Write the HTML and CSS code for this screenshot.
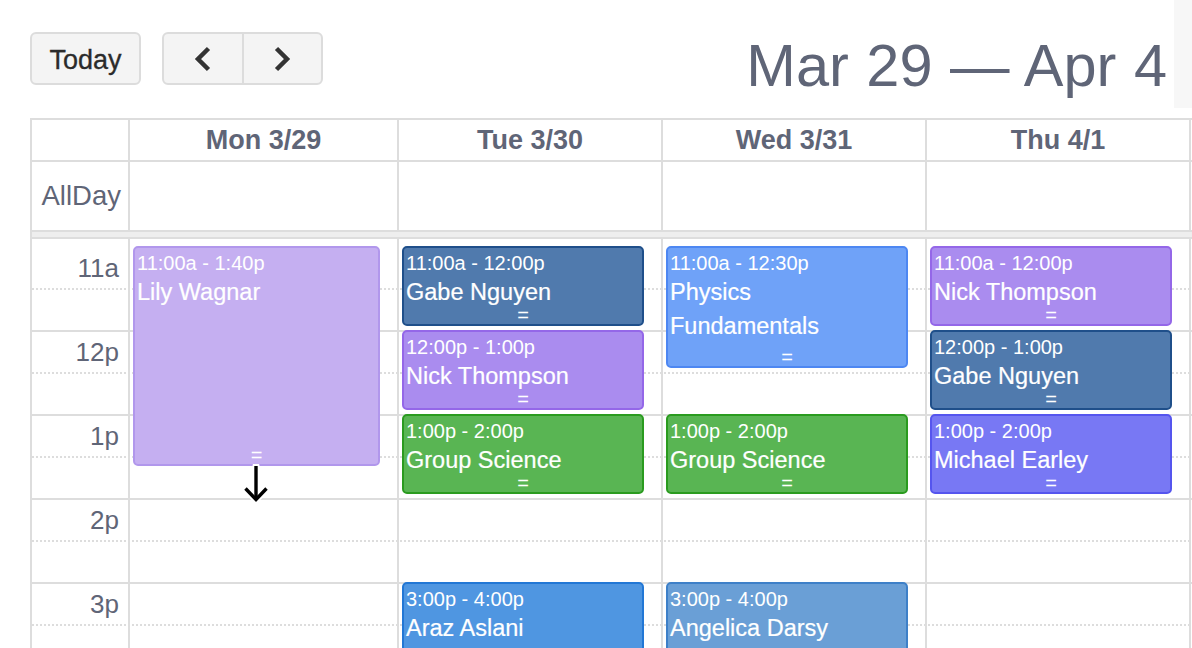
FILE: index.html
```html
<!DOCTYPE html>
<html lang="en">
<head>
<meta charset="utf-8">
<title>Calendar</title>
<link rel="stylesheet" href="styles.css">
</head>
<body>
<div class="page">
  <div class="toolbar">
    <button class="btn today">Today</button>
    <div class="btn-group">
      <button class="nav" aria-label="Previous"><svg width="20" height="26" viewBox="0 0 20 26"><polyline points="15.5,2.5 5,13 15.5,23.5" fill="none" stroke="#333" stroke-width="4.5"/></svg></button>
      <button class="nav" aria-label="Next"><svg width="20" height="26" viewBox="0 0 20 26"><polyline points="4.5,2.5 15,13 4.5,23.5" fill="none" stroke="#333" stroke-width="4.5"/></svg></button>
    </div>
    <h2 class="title">Mar 29 — Apr 4</h2>
    <div class="strip"></div>
  </div>

  <div class="cal">
    <div class="row head">
      <div class="cell axis"></div>
      <div class="cell">Mon 3/29</div>
      <div class="cell">Tue 3/30</div>
      <div class="cell">Wed 3/31</div>
      <div class="cell">Thu 4/1</div>
      <div class="cell"></div>
    </div>
    <div class="row allday">
      <div class="cell axis">AllDay</div>
      <div class="cell"></div>
      <div class="cell"></div>
      <div class="cell"></div>
      <div class="cell"></div>
      <div class="cell"></div>
    </div>
    <div class="divider"></div>

    <div class="timegrid">
      <div class="slots">
        <div class="slot partial"></div>
        <div class="slot hour"><span class="label">11a</span></div>
        <div class="slot half"></div>
        <div class="slot hour"><span class="label">12p</span></div>
        <div class="slot half"></div>
        <div class="slot hour"><span class="label">1p</span></div>
        <div class="slot half"></div>
        <div class="slot hour"><span class="label">2p</span></div>
        <div class="slot half"></div>
        <div class="slot hour"><span class="label">3p</span></div>
        <div class="slot half"></div>
      </div>

      <div class="cols">
        <div class="col axis"></div>

        <div class="col">
          <div class="event ev-lily" style="top:7px;height:220px">
            <div class="time">11:00a - 1:40p</div>
            <div class="name">Lily Wagnar</div>
            <div class="resizer">=</div>
          </div>
          <svg class="cursor" width="26" height="40" viewBox="0 0 26 40">
            <g fill="none" stroke="#fff" stroke-width="7" stroke-linecap="round" stroke-linejoin="round">
              <line x1="13" y1="2" x2="13" y2="35"/>
              <polyline points="2.5,24.5 13,35.5 23.5,24.5"/>
            </g>
            <g fill="none" stroke="#000" stroke-width="3.4" stroke-linejoin="miter">
              <line x1="13" y1="2" x2="13" y2="35"/>
              <polyline points="2.5,24.5 13,35.5 23.5,24.5"/>
            </g>
          </svg>
        </div>

        <div class="col">
          <div class="event ev-steel" style="top:7px;height:80px">
            <div class="time">11:00a - 12:00p</div>
            <div class="name">Gabe Nguyen</div>
            <div class="resizer">=</div>
          </div>
          <div class="event ev-violet" style="top:91px;height:80px">
            <div class="time">12:00p - 1:00p</div>
            <div class="name">Nick Thompson</div>
            <div class="resizer">=</div>
          </div>
          <div class="event ev-green" style="top:175px;height:80px">
            <div class="time">1:00p - 2:00p</div>
            <div class="name">Group Science</div>
            <div class="resizer">=</div>
          </div>
          <div class="event ev-blue" style="top:343px;height:80px">
            <div class="time">3:00p - 4:00p</div>
            <div class="name">Araz Aslani</div>
          </div>
        </div>

        <div class="col">
          <div class="event ev-sky" style="top:7px;height:122px">
            <div class="time">11:00a - 12:30p</div>
            <div class="name">Physics Fundamentals</div>
            <div class="resizer">=</div>
          </div>
          <div class="event ev-green" style="top:175px;height:80px">
            <div class="time">1:00p - 2:00p</div>
            <div class="name">Group Science</div>
            <div class="resizer">=</div>
          </div>
          <div class="event ev-denim" style="top:343px;height:80px">
            <div class="time">3:00p - 4:00p</div>
            <div class="name">Angelica Darsy</div>
          </div>
        </div>

        <div class="col">
          <div class="event ev-violet" style="top:7px;height:80px">
            <div class="time">11:00a - 12:00p</div>
            <div class="name">Nick Thompson</div>
            <div class="resizer">=</div>
          </div>
          <div class="event ev-steel" style="top:91px;height:80px">
            <div class="time">12:00p - 1:00p</div>
            <div class="name">Gabe Nguyen</div>
            <div class="resizer">=</div>
          </div>
          <div class="event ev-indigo" style="top:175px;height:80px">
            <div class="time">1:00p - 2:00p</div>
            <div class="name">Michael Earley</div>
            <div class="resizer">=</div>
          </div>
        </div>

        <div class="col"></div>
      </div>
    </div>
  </div>
</div>
</body>
</html>
```

FILE: styles.css
```css
html, body {
  margin: 0;
  padding: 0;
  background: #fff;
}

body {
  font-family: "Liberation Sans", Arial, Helvetica, sans-serif;
  overflow: hidden;
}

.page {
  width: 1192px;
  height: 648px;
  overflow: hidden;
}

/* ---------- toolbar ---------- */
.toolbar {
  display: flex;
  align-items: flex-start;
  height: 118px;
  padding-left: 30px;
  box-sizing: border-box;
}

.btn {
  font-family: inherit;
}

.today {
  margin-top: 32px;
  width: 111px;
  height: 53px;
  padding: 3px 0 0;
  box-sizing: border-box;
  border: 2px solid #dcdcdc;
  border-radius: 6px;
  background: #f4f4f4;
  color: #2b2b2b;
  font-size: 27px;
  line-height: 44px;
  -webkit-text-stroke: 0.3px #2b2b2b;
}

.btn-group {
  margin-top: 32px;
  margin-left: 21px;
  display: flex;
  width: 161px;
  height: 53px;
  box-sizing: border-box;
  border: 2px solid #dcdcdc;
  border-radius: 6px;
  overflow: hidden;
  background: #f4f4f4;
}

.nav {
  flex: 1;
  padding: 0;
  border: 0;
  background: transparent;
  display: flex;
  align-items: center;
  justify-content: center;
}

.nav + .nav {
  border-left: 2px solid #dcdcdc;
}

.title {
  margin: 36px 0 0 auto;
  font-size: 59.5px;
  line-height: 59px;
  font-weight: normal;
  word-spacing: 1px;
  color: #5f6577;
  white-space: nowrap;
}

.strip {
  flex: none;
  width: 18px;
  height: 108px;
  margin-left: 7px;
  background: #f7f7f7;
}

/* ---------- calendar ---------- */
.cal {
  margin-left: 30px;
  width: 1430px;
  border-left: 2px solid #ddd;
  border-top: 2px solid #ddd;
  color: #5f6577;
}

.row,
.cols {
  display: grid;
  grid-template-columns: 96px 269px 264px 264px 264px 264px;
}

.cell + .cell,
.col + .col {
  border-left: 2px solid #ddd;
}

.head {
  height: 42px;
  box-sizing: border-box;
  border-bottom: 2px solid #ddd;
}

.head .cell {
  font-weight: bold;
  font-size: 27px;
  line-height: 40px;
  text-align: center;
}

.allday {
  height: 70px;
  box-sizing: border-box;
  border-bottom: 2px solid #ddd;
}

.allday .axis {
  font-size: 27.5px;
  line-height: 68px;
  text-align: right;
  padding-right: 7px;
}

.divider {
  height: 7px;
  box-sizing: border-box;
  background: #eee;
  border-bottom: 2px solid #ddd;
}

.timegrid {
  position: relative;
  height: 440px;
}

.slot {
  height: 42px;
  box-sizing: border-box;
  border-bottom: 2px solid #ddd;
}

.slot.hour {
  border-bottom-style: dotted;
}

.slot.partial {
  height: 9px;
  border-bottom: 0;
}

.label {
  display: block;
  width: 96px;
  box-sizing: border-box;
  padding-right: 9px;
  text-align: right;
  font-size: 26px;
  line-height: 40px;
}

.cols {
  position: absolute;
  inset: 0;
}

.col {
  position: relative;
}

/* ---------- events ---------- */
.event {
  position: absolute;
  left: 3px;
  right: 17px;
  box-sizing: border-box;
  border: 2px solid;
  border-radius: 5px;
  padding: 3px 6px 0 2px;
  color: #fff;
  overflow: hidden;
}

.time {
  font-size: 20px;
  line-height: 24px;
  white-space: nowrap;
}

.name {
  font-size: 23.5px;
  line-height: 34px;
  -webkit-text-stroke: 0.2px #fff;
}

.resizer {
  position: absolute;
  left: 0;
  right: 0;
  bottom: -1px;
  text-align: center;
  font-size: 20px;
  line-height: 20px;
}

.ev-lily   { background: #c5aff1; border-color: #b197ec; }
.ev-steel  { background: #507aad; border-color: #1f4f8a; }
.ev-violet { background: #aa8cef; border-color: #9467e8; }
.ev-green  { background: #59b553; border-color: #2a9b1f; }
.ev-sky    { background: #6fa2f8; border-color: #4d87f2; }
.ev-indigo { background: #7878f4; border-color: #5555ee; }
.ev-blue   { background: #4f96e1; border-color: #2277d5; }
.ev-denim  { background: #6a9fd6; border-color: #3e80c8; }

.cursor {
  position: absolute;
  left: 113px;
  top: 225px;
}
```
